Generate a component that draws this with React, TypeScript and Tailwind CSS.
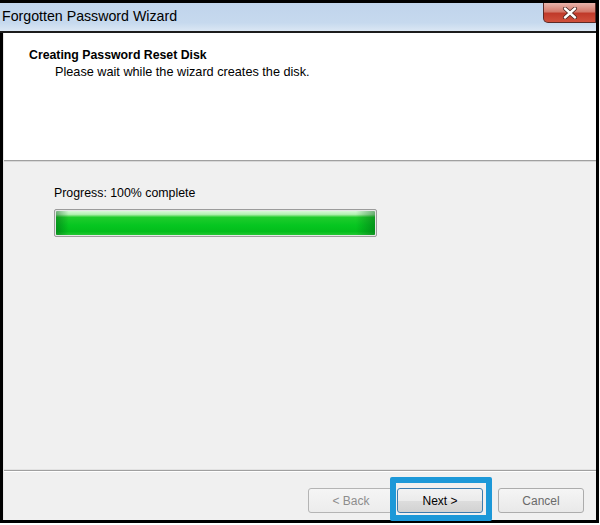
import React from "react";

function CloseButton() {
  return (
    <div className="absolute right-0 top-0 w-[53px] h-[20px] rounded-bl-[5px] border border-t-0 border-[#5b2a26] bg-[linear-gradient(to_bottom,#e8b4ac_0%,#d47a6c_45%,#c03a2a_55%,#d0503c_100%)] flex items-center justify-center">
      <svg width="16" height="12" viewBox="0 0 16 12">
        <path d="M3 1.5 L13 10.5 M13 1.5 L3 10.5" stroke="#4a2420" strokeWidth="4" strokeLinecap="round" />
        <path d="M3 1.5 L13 10.5 M13 1.5 L3 10.5" stroke="#ffffff" strokeWidth="2.4" strokeLinecap="round" />
      </svg>
    </div>
  );
}

function Btn({ label, color, border, bg }: { label: string; color: string; border: string; bg: string }) {
  return (
    <div className={`w-[86px] h-[25px] rounded-[3px] border flex items-center justify-center text-[12px] ${border} ${bg} ${color}`}>
      {label}
    </div>
  );
}

export default function App() {
  return (
    <div className="w-[600px] h-[525px] bg-white" style={{ fontFamily: '"Liberation Sans", Arial, sans-serif' }}>
      <div className="w-[599px] h-[523px] border-t-[3px] border-r-[3px] border-b-[3px] border-black flex flex-col">
        {/* Title bar */}
        <div className="relative h-[30px] shrink-0 border-b-2 border-[#1c1c1c] bg-[linear-gradient(to_bottom,#c0d4ec_0%,#c6d9ee_70%,#dbe7f4_100%)] flex items-center">
          <span className="pl-[2px] text-[14.2px] text-black leading-none pb-[1px]">Forgotten Password Wizard</span>
          <CloseButton />
        </div>
        {/* Body */}
        <div className="flex-1 flex flex-col border-l-[3px] border-black">
          <div className="flex-1 flex flex-col border-l border-[#e6e6e6]">
            {/* Header */}
            <div className="h-[127px] shrink-0 bg-white pl-[25px] pt-[14px]">
              <div className="text-[12.3px] font-bold text-black leading-[16px]">Creating Password Reset Disk</div>
              <div className="pl-[26px] pt-[2px] text-[12.7px] text-black leading-[15px]">Please wait while the wizard creates the disk.</div>
            </div>
            <div className="h-[1px] bg-[#a0a0a0]" />
            <div className="h-[1px] bg-[#d8d8d8]" />
            {/* Middle */}
            <div className="flex-1 bg-[#f0f0f0] pl-[50px] pt-[24px] border-b border-[#e2e2e2]">
              <div className="text-[12.35px] text-black leading-[15px]">Progress: 100% complete</div>
              <div className="mt-[8px] w-[323px] h-[28px] rounded-[2px] border border-[#9c9c9c] bg-[#e6e6e6] p-[1px]">
                <div className="relative w-full h-full rounded-[1px] overflow-hidden bg-[linear-gradient(to_bottom,#d8f8d8_0%,#b4f0b4_14%,#6ede70_20%,#1fcc2c_26%,#06c620_60%,#03bd1c_85%,#22c832_100%)]">
                  <div className="absolute inset-0 bg-[linear-gradient(to_right,rgba(0,90,20,0.45)_0%,rgba(0,90,20,0)_4%,rgba(0,90,20,0)_94%,rgba(0,90,20,0.45)_100%)]" />
                </div>
              </div>
            </div>
            <div className="h-[1px] bg-[#a0a0a0]" />
            <div className="h-[1px] bg-white" />
            {/* Footer */}
            <div className="h-[48px] shrink-0 bg-[#f0f0f0] flex items-start justify-end pr-[12px] pt-[16px]">
              <Btn label="< Back" color="text-[#8d8d8d]" border="border-[#b4b4b4]" bg="bg-[linear-gradient(to_bottom,#f5f5f5,#ececec)]" />
              <div className="relative ml-[3px]">
                <Btn label="Next >" color="text-black" border="border-[#3d7bad]" bg="bg-[linear-gradient(to_bottom,#f3f3f3_0%,#ebebeb_50%,#dddddd_51%,#d2d2d2_100%)]" />
                <div className="absolute left-[-7px] right-[-9px] top-[-11px] bottom-[-8px] border-[6px] border-[#1c98d8] rounded-[2px]" />
              </div>
              <div className="ml-[15px]">
                <Btn label="Cancel" color="text-[#6a6a6a]" border="border-[#acacac]" bg="bg-[linear-gradient(to_bottom,#f5f5f5,#e9e9e9)]" />
              </div>
            </div>
          </div>
        </div>
      </div>
    </div>
  );
}
